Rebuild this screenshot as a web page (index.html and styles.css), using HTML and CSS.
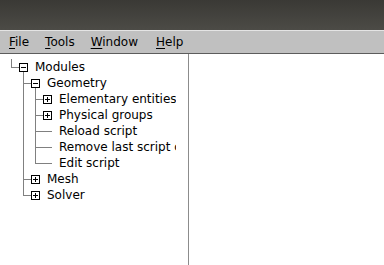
FILE: index.html
```html
<!DOCTYPE html>
<html lang="en">

<head>
    <meta charset="UTF-8">
    <title>Gmsh</title>
    <link rel="stylesheet" href="styles.css">
</head>

<body>
    <div class="titlebar"></div>

    <div class="menubar">
        <span class="menu-item"><u>F</u>ile</span>
        <span class="menu-item"><u>T</u>ools</span>
        <span class="menu-item"><u>W</u>indow</span>
        <span class="menu-item help"><u>H</u>elp</span>
    </div>

    <div class="main">
        <div class="tree">
            <div class="tree-rows">
                <!-- level 0 -->
                <div class="row">
                    <span class="cell elbow"></span>
                    <span class="slot open"><span class="box minus"></span></span>
                    <span class="label">Modules</span>
                </div>
                <!-- level 1 -->
                <div class="row">
                    <span class="cell"></span>
                    <span class="cell tee"></span>
                    <span class="slot open"><span class="box minus"></span></span>
                    <span class="label">Geometry</span>
                </div>
                <!-- level 2 -->
                <div class="row">
                    <span class="cell"></span>
                    <span class="cell pipe"></span>
                    <span class="cell tee"></span>
                    <span class="slot"><span class="box plus"></span></span>
                    <span class="label">Elementary entities</span>
                </div>
                <div class="row">
                    <span class="cell"></span>
                    <span class="cell pipe"></span>
                    <span class="cell tee"></span>
                    <span class="slot"><span class="box plus"></span></span>
                    <span class="label">Physical groups</span>
                </div>
                <div class="row">
                    <span class="cell"></span>
                    <span class="cell pipe"></span>
                    <span class="cell tee"></span>
                    <span class="slot leaf"></span>
                    <span class="label">Reload script</span>
                </div>
                <div class="row">
                    <span class="cell"></span>
                    <span class="cell pipe"></span>
                    <span class="cell tee"></span>
                    <span class="slot leaf"></span>
                    <span class="label">Remove last script command</span>
                </div>
                <div class="row">
                    <span class="cell"></span>
                    <span class="cell pipe"></span>
                    <span class="cell elbow"></span>
                    <span class="slot leaf"></span>
                    <span class="label">Edit script</span>
                </div>
                <!-- back to level 1 -->
                <div class="row">
                    <span class="cell"></span>
                    <span class="cell tee"></span>
                    <span class="slot"><span class="box plus"></span></span>
                    <span class="label">Mesh</span>
                </div>
                <div class="row">
                    <span class="cell"></span>
                    <span class="cell elbow"></span>
                    <span class="slot"><span class="box plus"></span></span>
                    <span class="label">Solver</span>
                </div>
            </div>
        </div>
        <div class="view"></div>
    </div>
</body>

</html>
```

FILE: styles.css
```css
body {
    margin: 0;
    padding: 0;
    width: 384px;
    height: 265px;
    overflow: hidden;
    background-color: #fff;
    font-family: "DejaVu Sans", sans-serif;
    font-size: 12px;
    color: #000;
    display: flex;
    flex-direction: column;
}

/* barra de titulo da janela */
.titlebar {
    height: 30px;
    flex: none;
    background: linear-gradient(#3a3935, #4c4b46);
}

.menubar {
    height: 22px;
    flex: none;
    display: flex;
    align-items: center;
    padding-left: 1px;
    background-color: #c0c0c0;
    border-top: 1px solid #e4e4e4;
    border-bottom: 1px solid #5c5c5c;
    line-height: 22px;
}

.menu-item {
    padding: 0 8px;
}

.menu-item.help {
    padding-left: 10px;
}

.menu-item u {
    text-underline-offset: 2px;
}

.main {
    flex: 1;
    display: flex;
}

.tree {
    width: 189px;
    flex: none;
    border-right: 1px solid #8c8c8c;
    padding: 5px 0 0 5px;
    box-sizing: border-box;
}

.tree-rows {
    width: 171px;
    overflow: hidden;
}

.row {
    display: flex;
    height: 16px;
}

/* linhas de ligacao da arvore */
.cell {
    width: 12px;
    height: 16px;
    flex: none;
}

.cell.pipe {
    background: linear-gradient(#808080, #808080) 6px 0 / 1px 16px no-repeat;
}

.cell.tee {
    background:
        linear-gradient(#808080, #808080) 6px 0 / 1px 16px no-repeat,
        linear-gradient(#808080, #808080) 6px 8px / 6px 1px no-repeat;
}

.cell.elbow {
    background:
        linear-gradient(#808080, #808080) 6px 0 / 1px 9px no-repeat,
        linear-gradient(#808080, #808080) 6px 8px / 6px 1px no-repeat;
}

.slot {
    width: 12px;
    height: 16px;
    flex: none;
    background: linear-gradient(#808080, #808080) 0 8px / 2px 1px no-repeat;
}

.slot.open {
    background:
        linear-gradient(#808080, #808080) 0 8px / 2px 1px no-repeat,
        linear-gradient(#808080, #808080) 6px 12px / 1px 4px no-repeat;
}

.slot.leaf {
    background: linear-gradient(#808080, #808080) 0 8px / 11px 1px no-repeat;
}

.box {
    display: block;
    width: 7px;
    height: 7px;
    margin: 4px 0 0 2px;
    border: 1px solid #000;
    background-color: #fff;
}

.box.minus {
    background: #fff linear-gradient(#000, #000) 1px 3px / 5px 1px no-repeat;
}

.box.plus {
    background-color: #fff;
    background-image:
        linear-gradient(#000, #000),
        linear-gradient(#000, #000);
    background-position: 1px 3px, 3px 1px;
    background-size: 5px 1px, 1px 5px;
    background-repeat: no-repeat;
}

.label {
    padding-left: 6px;
    line-height: 16px;
    white-space: nowrap;
}

.view {
    flex: 1;
    background-color: #fff;
}
```
